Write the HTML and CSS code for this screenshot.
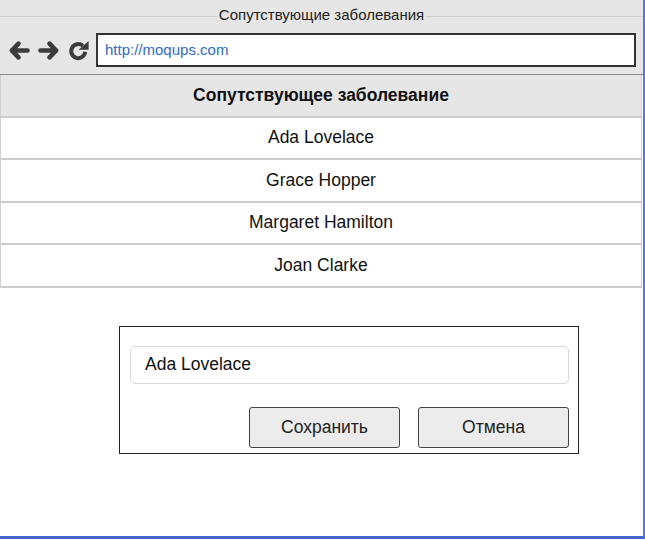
FILE: index.html
```html
<!DOCTYPE html>
<html lang="ru">
<head>
<meta charset="utf-8">
<title>Сопутствующие заболевания</title>
<link rel="stylesheet" href="styles.css">
</head>
<body>
<div class="window">
  <div class="titlebar"><span class="title">Сопутствующие заболевания</span></div>
  <div class="toolbar">
    <div class="navs">
      <svg class="icon" width="22" height="21" viewBox="0 0 22 21"><path d="M19.5 10.5H3.8M10.5 3.6L3.8 10.5L10.5 17.4" fill="none" stroke="#3c3c3c" stroke-width="4.6" stroke-linecap="round" stroke-linejoin="round"/></svg>
      <svg class="icon" width="22" height="21" viewBox="0 0 22 21"><path d="M2.5 10.5H18.2M11.5 3.6L18.2 10.5L11.5 17.4" fill="none" stroke="#3c3c3c" stroke-width="4.6" stroke-linecap="round" stroke-linejoin="round"/></svg>
      <svg class="icon" width="21" height="21" viewBox="0 0 21 21"><path d="M14.8 5.8A7 7 0 1 0 17.2 11.8" fill="none" stroke="#3c3c3c" stroke-width="4" stroke-linecap="butt"/><path d="M10.6 9.8L20.6 9.8L20.6 1Z" fill="#3c3c3c"/></svg>
    </div>
    <div class="url">http://moqups.com</div>
  </div>
  <div class="content">
    <div class="table">
      <div class="th">Сопутствующее заболевание</div>
      <div class="td">Ada Lovelace</div>
      <div class="td">Grace Hopper</div>
      <div class="td">Margaret Hamilton</div>
      <div class="td">Joan Clarke</div>
    </div>
    <div class="dialog">
      <div class="field">Ada Lovelace</div>
      <div class="actions">
        <button class="btn">Сохранить</button>
        <button class="btn">Отмена</button>
      </div>
    </div>
  </div>
</div>
</body>
</html>
```
FILE: styles.css
```css
html, body {
  margin: 0;
  padding: 0;
  background: #fff;
}
body {
  font-family: "Liberation Sans", Arial, sans-serif;
  color: #111;
}
.window {
  width: 645px;
  height: 539px;
  box-sizing: border-box;
  border-right: 2px solid #5a78d6;
  border-bottom: 3px solid #4565cc;
  display: flex;
  flex-direction: column;
  background: #fff;
}
.titlebar {
  height: 31px;
  background: #e6e6e6 linear-gradient(#cfcfcf, #cfcfcf) no-repeat 0 16px / 100% 1px;
  display: flex;
  justify-content: center;
  align-items: flex-start;
}
.title {
  margin-top: 7px;
  background: #e6e6e6;
  font-size: 15px;
  line-height: 16px;
  padding: 0 1px;
  color: #222;
}
.toolbar {
  height: 41px;
  background: #e6e6e6;
  border-bottom: 1px solid #8a8a8a;
  display: flex;
  align-items: flex-start;
  padding: 2px 7px 0 8px;
  gap: 7px;
}
.navs {
  display: flex;
  gap: 8px;
  padding-top: 7px;
}
.icon { display: block; }
.url {
  flex: 1;
  height: 34px;
  box-sizing: border-box;
  border: 2px solid #333;
  background: #fff;
  color: #2e6bc6;
  font-size: 15px;
  line-height: 30px;
  padding-left: 7px;
}
.content {
  flex: 1;
}
.table {
  border-left: 1px solid #cfcfcf;
  border-right: 1px solid #cfcfcf;
  margin-right: 1px;
}
.th, .td {
  box-sizing: border-box;
  border-bottom: 2px solid #cccccc;
  display: flex;
  align-items: center;
  justify-content: center;
  font-size: 17.5px;
  height: 42.5px;
}
.th {
  background: #e6e6e6;
  font-weight: bold;
  font-size: 17.5px;
}
.dialog {
  width: 460px;
  height: 128px;
  box-sizing: border-box;
  margin: 38px 0 0 119px;
  border: 1px solid #222;
  padding: 19px 9px 0 10px;
}
.field {
  height: 38px;
  box-sizing: border-box;
  border: 1px solid #d8d8d8;
  border-radius: 5px;
  font-size: 17.5px;
  line-height: 34px;
  padding-left: 14px;
}
.actions {
  display: flex;
  justify-content: flex-end;
  gap: 18px;
  margin-top: 23px;
}
.btn {
  width: 151px;
  height: 41px;
  background: #ececec;
  border: 1px solid #444;
  border-radius: 3px;
  font-family: "Liberation Sans", Arial, sans-serif;
  font-size: 17.5px;
  color: #222;
  padding: 0;
}
```
